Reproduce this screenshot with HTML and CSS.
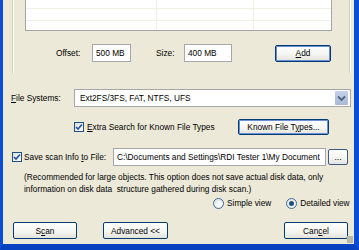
FILE: index.html
```html
<!DOCTYPE html>
<html lang="en">
<head>
  <meta charset="UTF-8">
  <title>Scan Options</title>
  <link rel="stylesheet" href="styles.css">
</head>
<body>
  <div class="window">
    <div class="group">
      <div class="list">
        <div class="list-row r1"><span></span><span></span><span></span></div>
        <div class="list-row r2"><span></span><span></span><span></span></div>
        <div class="list-row r3"><span></span><span></span><span></span></div>
      </div>
      <div class="range-row">
        <span class="lbl lbl-offset">Offset:</span>
        <div class="field f-offset">500 MB</div>
        <span class="lbl lbl-size">Size:</span>
        <div class="field f-size">400 MB</div>
        <button class="btn btn-default btn-add"><u>A</u>dd</button>
      </div>
    </div>

    <div class="row fs-row">
      <span class="lbl lbl-fs"><u>F</u>ile Systems:</span>
      <div class="combo">
        <span class="combo-text">Ext2FS/3FS, FAT, NTFS, UFS</span>
        <span class="combo-btn">
          <svg width="9" height="7" viewBox="0 0 9 7"><path d="M1 1.5 L4.5 5 L8 1.5" fill="none" stroke="#4d6185" stroke-width="1.8"/></svg>
        </span>
      </div>
    </div>

    <div class="row extra-row">
      <span class="check checked">
        <svg width="8" height="8" viewBox="0 0 8 8"><path d="M1 4 L3 6 L7 1.5" fill="none" stroke="#2153a3" stroke-width="1.6"/></svg>
      </span>
      <span class="lbl lbl-extra"><u>E</u>xtra Search for Known File Types</span>
      <button class="btn btn-default btn-known">Known File T<u>y</u>pes...</button>
    </div>

    <div class="row save-row">
      <span class="check checked">
        <svg width="8" height="8" viewBox="0 0 8 8"><path d="M1 4 L3 6 L7 1.5" fill="none" stroke="#2153a3" stroke-width="1.6"/></svg>
      </span>
      <span class="lbl lbl-save">Save scan Info <u>t</u>o File:</span>
      <div class="field f-path"><span class="path-text">C:\Documents and Settings\RDI Tester 1\My Document</span></div>
      <button class="btn btn-dots">...</button>
    </div>

    <p class="note">(Recommended for large objects. This option does not save actual disk data, only<br>information on disk data&nbsp; structure gathered during disk scan.)</p>

    <div class="row view-row">
      <span class="radio"></span><span class="lbl lbl-radio">Simple view</span>
      <span class="radio on"></span><span class="lbl lbl-radio">Detailed view</span>
    </div>

    <div class="row actions">
      <button class="btn btn-scan">S<u>c</u>an</button>
      <button class="btn btn-adv">Advanced &lt;&lt;</button>
      <button class="btn btn-cancel">Can<u>c</u>el</button>
    </div>
    <div class="grip"></div>
  </div>
</body>
</html>
```

FILE: styles.css
```css
* { box-sizing: border-box; margin: 0; padding: 0 }
html, body { height: 100% }
body {
  background: #0a4cd8;
  font-family: "Liberation Sans", Arial, sans-serif;
  font-size: 8.3px;
  color: #000;
}
u { text-decoration: underline; text-underline-offset: 1px }

.window {
  position: relative;
  width: 359px;
  height: 250px;
  background: #ece9d8;
  border-left: 3px solid #0a4cd8;
  border-right: 5px solid #0a4cd8;
  border-bottom: 6px solid #0841c0;
  display: flex;
  flex-direction: column;
}

.group {
  margin-left: 9px;
  width: 338px;
  height: 73px;
  flex-shrink: 0;
  border-left: 1px solid #d0d0bf;
  border-right: 1px solid #d0d0bf;
  box-shadow: inset 1px 0 #fff, 1px 0 #fff;
  padding-left: 12px;
}
.list {
  width: 307px;
  background: #fff;
  border-left: 1px solid #a5a5a5;
  border-right: 1px solid #a5a5a5;
  border-bottom: 1px solid #a5a5a5;
}
.list-row {
  display: grid;
  grid-template-columns: 131px 97px 1fr;
  border-bottom: 1px solid #f0efe3;
}
.list-row span { border-right: 1px solid #f0efe3 }
.list-row span:last-child { border-right: none }
.list-row.r1 { height: 9px }
.list-row.r2 { height: 12px }
.list-row.r3 { height: 9px; border-bottom: none }

.range-row {
  display: flex;
  align-items: center;
  margin-top: 13px;
  height: 18px;
}
.lbl { white-space: nowrap; line-height: 12px; flex-shrink: 0 }
.lbl-offset { margin-left: 31px; width: 36px }
.lbl-size { margin-left: 25px; width: 28px }

.field {
  flex-shrink: 0;
  height: 18px;
  background: #fff;
  border: 1px solid #a7a6aa;
  padding: 0 3px;
  line-height: 16px;
  white-space: nowrap;
  overflow: hidden;
}
.f-offset { width: 39px }
.f-size { width: 48px }

.btn {
  flex-shrink: 0;
  font: inherit;
  height: 17px;
  border: 1px solid #003c74;
  border-radius: 2px;
  background: linear-gradient(#fff, #f4f4f0 60%, #e3e2da);
  color: #000;
  white-space: nowrap;
}
.btn-default { box-shadow: inset 0 0 0 1px #6c8fd8 }
.btn-add { margin-left: 43px; width: 56px }

.row { display: flex; align-items: center; flex-shrink: 0 }

.fs-row { margin-top: 16px; height: 18px }
.lbl-fs { margin-left: 8px; width: 63px }
.combo {
  display: flex;
  align-items: center;
  width: 277px;
  height: 18px;
  background: #fff;
  border: 1px solid #a7a6aa;
  padding: 1px;
}
.combo-text { flex: 1; padding-left: 4px }
.combo-btn {
  display: flex;
  align-items: center;
  justify-content: center;
  width: 13px;
  height: 14px;
  border-radius: 1px;
  background: linear-gradient(#c6d2ea, #a9b8d4);
  margin-right: 1px;
}

.extra-row { margin-top: 12px; height: 16px }
.check {
  flex-shrink: 0;
  display: flex;
  align-items: center;
  justify-content: center;
  width: 10px;
  height: 10px;
  border: 1px solid #1c5180;
  background: linear-gradient(135deg, #dcdcd7, #fff);
}
.extra-row .check { margin-left: 71px }
.lbl-extra { margin-left: 3px; width: 151px }
.btn-known { width: 91px; height: 16px }

.save-row { margin-top: 13px; height: 18px }
.save-row .check { margin-left: 9px }
.lbl-save { margin-left: 2px; width: 89px }
.f-path { width: 213px }
.btn-dots { margin-left: 2px; width: 20px; height: 16px; border-color: #3c5b8c }

.note {
  margin: 5px 0 0 21px;
  line-height: 12px;
  white-space: nowrap;
}

.view-row { margin-top: 2px; height: 12px }
.radio {
  flex-shrink: 0;
  width: 11px;
  height: 11px;
  border: 1px solid #3c6b9c;
  border-radius: 50%;
  background: radial-gradient(circle at 60% 60%, #fff, #dcdcd7);
  margin-left: 210px;
  display: flex;
  align-items: center;
  justify-content: center;
}
.radio.on { margin-left: 15px }
.radio.on::after {
  content: "";
  width: 5px;
  height: 5px;
  border-radius: 50%;
  background: #1c5180;
}
.lbl-radio { margin-left: 3px }

.actions { margin-top: 13px; height: 17px }
.btn-scan { margin-left: 10px; width: 64px }
.btn-adv { margin-left: 26px; width: 65px }
.btn-cancel { margin-left: 116px; width: 64px }

.grip {
  position: absolute;
  right: 1px;
  bottom: 1px;
  width: 6px;
  height: 7px;
  background: radial-gradient(circle, #b8b6a8 0.7px, transparent 1.1px) 0 0 / 2px 2px;
}
```
